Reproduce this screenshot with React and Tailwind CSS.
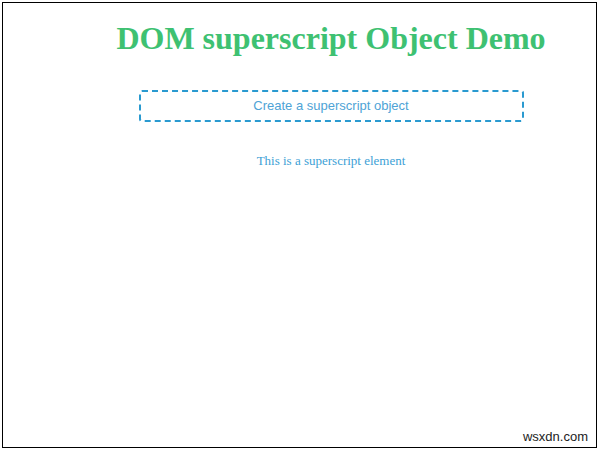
import React from 'react';

function App() {
  return (
    <div className="w-[600px] h-[451px] bg-white relative">
      {/* marco de la captura */}
      <div className="absolute left-[2px] top-[2px] w-[595px] h-[446px] border border-black" />

      <div className="flex flex-col items-center pl-[62px] pt-[20px]">
        <h1 className="font-['Liberation_Serif',serif] text-[32px] font-bold text-[#3ec172] leading-[36px]">
          DOM superscript Object Demo
        </h1>

        <button className="mt-[34px] w-[385px] h-[32px] border-2 border-dashed border-[#2a9ad0] rounded-[3px] font-['Liberation_Sans',Arial,sans-serif] text-[13px] text-[#4ea3d6] bg-white">
          Create a superscript object
        </button>

        <p className="mt-[29px] font-['Liberation_Serif',serif] text-[13px] leading-[20px] text-[#3d9fd6]">
          This is a superscript element
        </p>
      </div>

      <span className="absolute right-[12px] bottom-[5px] font-['Liberation_Sans',Arial,sans-serif] text-[13px] text-[#222]">
        wsxdn.com
      </span>
    </div>
  );
}

export default App;
